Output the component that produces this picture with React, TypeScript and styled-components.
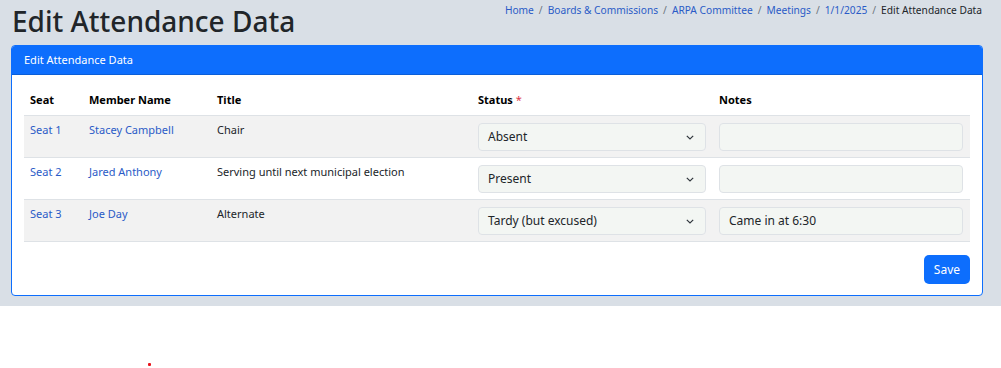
import React from 'react';
import styled, { createGlobalStyle } from 'styled-components';

const GlobalStyle = createGlobalStyle`
  *, *::before, *::after {
    box-sizing: border-box;
  }
  body {
    margin: 0;
    background: #fff;
    font-family: 'Noto Sans', 'Open Sans', sans-serif;
    color: #212529;
  }
`;

const Page = styled.div`
  background: #d9dfe6;
  padding: 0 18px 10px 11px;
`;

const TopBar = styled.div`
  display: flex;
  justify-content: space-between;
  align-items: flex-start;
  height: 45px;
`;

const Heading = styled.h1`
  margin: 2px 0 0 1px;
  font-size: 28px;
  font-weight: 500;
  line-height: 38px;
  color: #212529;
`;

const Crumbs = styled.nav`
  display: flex;
  gap: 5px;
  font-size: 10.2px;
  line-height: 20px;
  margin-right: 1px;
`;

const Crumb = styled.span<{ $current?: boolean }>`
  color: ${(p) => (p.$current ? '#212529' : '#2a5bc7')};
`;

const Sep = styled.span`
  color: #6c757d;
`;

const Card = styled.section`
  border: 1px solid #0d6efd;
  border-radius: 4px;
  background: #fff;
  overflow: hidden;
`;

const CardHeader = styled.div`
  background: #0d6efd;
  color: #fff;
  font-size: 11px;
  line-height: 28px;
  padding: 0 12px;
  border-bottom: 1px solid #0b5ed7;
`;

const CardBody = styled.div`
  padding: 12px 12px 11px;
`;

const Table = styled.table`
  width: 100%;
  table-layout: fixed;
  border-collapse: collapse;
  font-size: 11px;
  line-height: 18px;
`;

const Th = styled.th<{ $w: number }>`
  width: ${(p) => p.$w}px;
  text-align: left;
  font-weight: 700;
  color: #000;
  padding: 4px 6px 6px;
  border-bottom: 1px solid #dee2e6;
`;

const Row = styled.tr<{ $striped: boolean }>`
  background: ${(p) => (p.$striped ? '#f2f2f2' : '#fff')};
  border-bottom: 1px solid #dee2e6;
`;

const Td = styled.td`
  vertical-align: top;
  padding: 5px 6px 8px;
  height: 41px;
`;

const FieldTd = styled(Td)`
  padding: 7px 7px 6px 6px;
`;

const Link = styled.span`
  color: #2a5bc7;
`;

const SelectBox = styled.div`
  display: flex;
  align-items: center;
  justify-content: space-between;
  height: 28px;
  border: 1px solid #dee2e6;
  border-radius: 4px;
  background: #f3f6f3;
  padding: 0 11px 0 9px;
  font-size: 12px;
  color: #212529;
`;

const InputBox = styled.div`
  height: 28px;
  line-height: 26px;
  border: 1px solid #dee2e6;
  border-radius: 4px;
  background: #f3f6f3;
  padding: 0 9px;
  font-size: 12px;
  color: #212529;
`;

const Required = styled.span`
  color: #dc3545;
  font-weight: 400;
`;

const Footer = styled.div`
  display: flex;
  justify-content: flex-end;
  margin-top: 13px;
`;

const SaveButton = styled.button`
  background: #0d6efd;
  color: #fff;
  border: none;
  border-radius: 5px;
  height: 29px;
  padding: 0 10px;
  font-family: inherit;
  font-size: 12px;
`;

const Dot = styled.div`
  width: 3px;
  height: 3px;
  border-radius: 1px;
  background: #e8141b;
  margin: 57px 0 0 148px;
`;

const Chevron = () => (
  <svg width="8" height="5" viewBox="0 0 8 5">
    <path d="M0.8 0.8L4 4l3.2-3.2" fill="none" stroke="#343a40" strokeWidth="1.2" />
  </svg>
);

const rows = [
  { seat: 'Seat 1', name: 'Stacey Campbell', title: 'Chair', status: 'Absent', notes: '' },
  { seat: 'Seat 2', name: 'Jared Anthony', title: 'Serving until next municipal election', status: 'Present', notes: '' },
  { seat: 'Seat 3', name: 'Joe Day', title: 'Alternate', status: 'Tardy (but excused)', notes: 'Came in at 6:30' },
];

const crumbs = ['Home', 'Boards & Commissions', 'ARPA Committee', 'Meetings', '1/1/2025'];

export default function App() {
  return (
    <>
      <GlobalStyle />
      <Page>
        <TopBar>
          <Heading>Edit Attendance Data</Heading>
          <Crumbs>
            {crumbs.map((c) => (
              <React.Fragment key={c}>
                <Crumb>{c}</Crumb>
                <Sep>/</Sep>
              </React.Fragment>
            ))}
            <Crumb $current>Edit Attendance Data</Crumb>
          </Crumbs>
        </TopBar>
        <Card>
          <CardHeader>Edit Attendance Data</CardHeader>
          <CardBody>
            <Table>
              <thead>
                <tr>
                  <Th $w={59}>Seat</Th>
                  <Th $w={128}>Member Name</Th>
                  <Th $w={261}>Title</Th>
                  <Th $w={241}>
                    Status <Required>*</Required>
                  </Th>
                  <Th $w={257}>Notes</Th>
                </tr>
              </thead>
              <tbody>
                {rows.map((r, i) => (
                  <Row key={r.seat} $striped={i % 2 === 0}>
                    <Td>
                      <Link>{r.seat}</Link>
                    </Td>
                    <Td>
                      <Link>{r.name}</Link>
                    </Td>
                    <Td>{r.title}</Td>
                    <FieldTd>
                      <SelectBox>
                        <span>{r.status}</span>
                        <Chevron />
                      </SelectBox>
                    </FieldTd>
                    <FieldTd>
                      <InputBox>{r.notes}</InputBox>
                    </FieldTd>
                  </Row>
                ))}
              </tbody>
            </Table>
            <Footer>
              <SaveButton>Save</SaveButton>
            </Footer>
          </CardBody>
        </Card>
      </Page>
      <Dot />
    </>
  );
}
